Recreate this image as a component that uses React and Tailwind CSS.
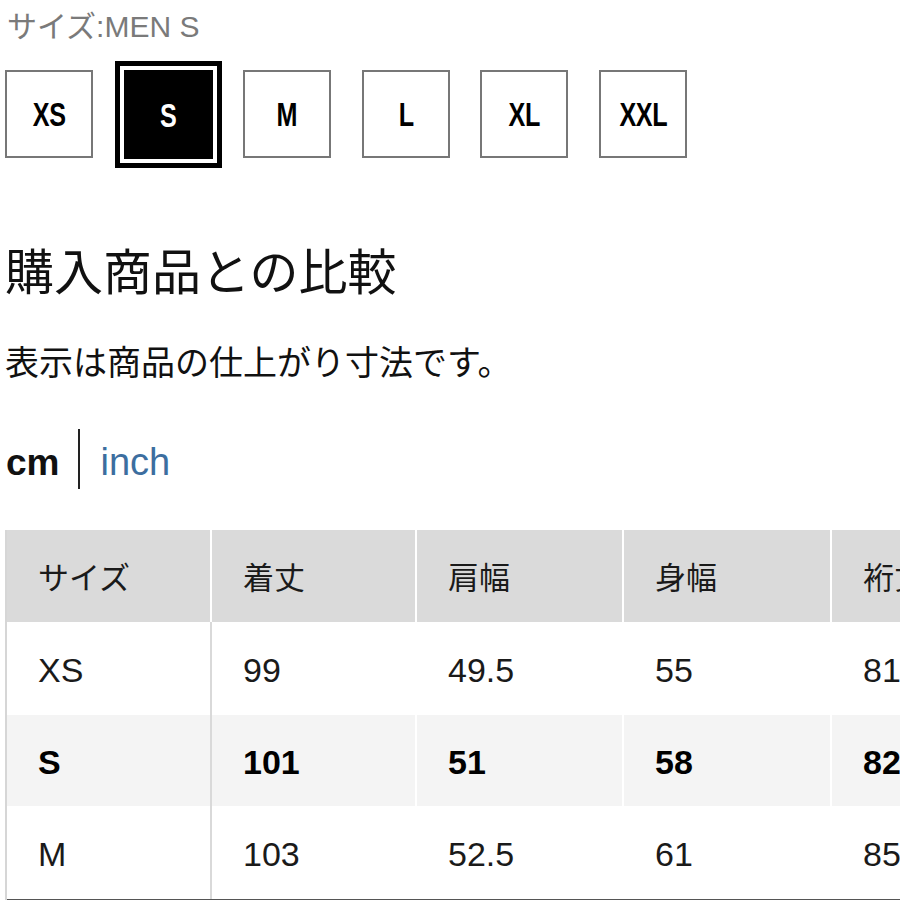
import React from "react";

const FONT = { fontFamily: '"Liberation Sans", "Noto Sans CJK JP", sans-serif' };

const sizes = ["XS", "S", "M", "L", "XL", "XXL"];

const headers = ["サイズ", "着丈", "肩幅", "身幅", "裄丈"];
const rows = [
  { cells: ["XS", "99", "49.5", "55", "81"], bold: false, bg: "bg-white" },
  { cells: ["S", "101", "51", "58", "82"], bold: true, bg: "bg-[#f4f4f4]" },
  { cells: ["M", "103", "52.5", "61", "85"], bold: false, bg: "bg-white" },
];
const widths = ["w-[205px]", "w-[205px]", "w-[207px]", "w-[208px]", "w-[220px]"];

function Label({ s }) {
  return (
    <span className="inline-block text-[34px] font-bold leading-none scale-x-[0.74] tracking-[-0.5px]">
      {s}
    </span>
  );
}

export default function App() {
  return (
    <div className="w-[900px] h-[900px] overflow-hidden bg-white text-[#111]" style={FONT}>
      <div className="h-[52px] flex items-center pl-[7px] pt-[2px] text-[30px] text-[#7a7a7a] leading-none">
        サイズ:MEN S
      </div>
      <div className="mt-[18px] flex gap-[30.6px] pl-[5px]">
        {sizes.map((s) =>
          s === "S" ? (
            <div
              key={s}
              className="w-[89px] h-[89px] bg-black text-white flex items-center justify-center outline-[5px] outline-solid outline-black outline-offset-[4px]"
            >
              <Label s={s} />
            </div>
          ) : (
            <div
              key={s}
              className="w-[88px] h-[88px] border-2 border-[#777] bg-white text-black flex items-center justify-center"
            >
              <Label s={s} />
            </div>
          )
        )}
      </div>
      <div className="mt-[89px] h-[50px] flex items-center pl-[5px] text-[49px] leading-none text-[#111]">
        購入商品との比較
      </div>
      <div className="mt-[45px] h-[40px] flex items-center pl-[5px] text-[34px] leading-none text-[#111]">
        表示は商品の仕上がり寸法です。
      </div>
      <div className="mt-[46px] h-[60px] flex items-center pl-[6px]">
        <span className="text-[37px] font-bold leading-none pt-[6px]">cm</span>
        <span className="ml-[19px] w-[2px] h-[60px] bg-[#222]"></span>
        <span className="ml-[20px] text-[38px] leading-none text-[#3c6e9f] pt-[6px]">inch</span>
      </div>
      <div className="mt-[41px] ml-[5px] border-l-2 border-[#d6d6d6] w-[1100px]">
        <div className="flex h-[92px] bg-[#dadada]">
          {headers.map((h, i) => (
            <div
              key={h}
              className={`${widths[i]} shrink-0 border-r-2 border-white flex items-center pl-[31px] pt-[4px] text-[31px] leading-none text-[#1a1a1a]`}
            >
              {h}
            </div>
          ))}
        </div>
        {rows.map((r, ri) => (
          <div key={ri} className={`flex ${ri === 1 ? "h-[91px]" : "h-[93px]"} ${r.bg}`}>
            {r.cells.map((c, i) => (
              <div
                key={i}
                className={`${widths[i]} shrink-0 border-r-2 ${i === 0 ? "border-[#d9d9d9]" : "border-white"} flex items-center pl-[31px] pt-[3px] text-[34px] leading-none ${r.bold ? "font-bold text-black" : "text-[#1a1a1a]"}`}
              >
                {c}
              </div>
            ))}
          </div>
        ))}
        <div className="h-[3px] bg-[#555]"></div>
      </div>
    </div>
  );
}
